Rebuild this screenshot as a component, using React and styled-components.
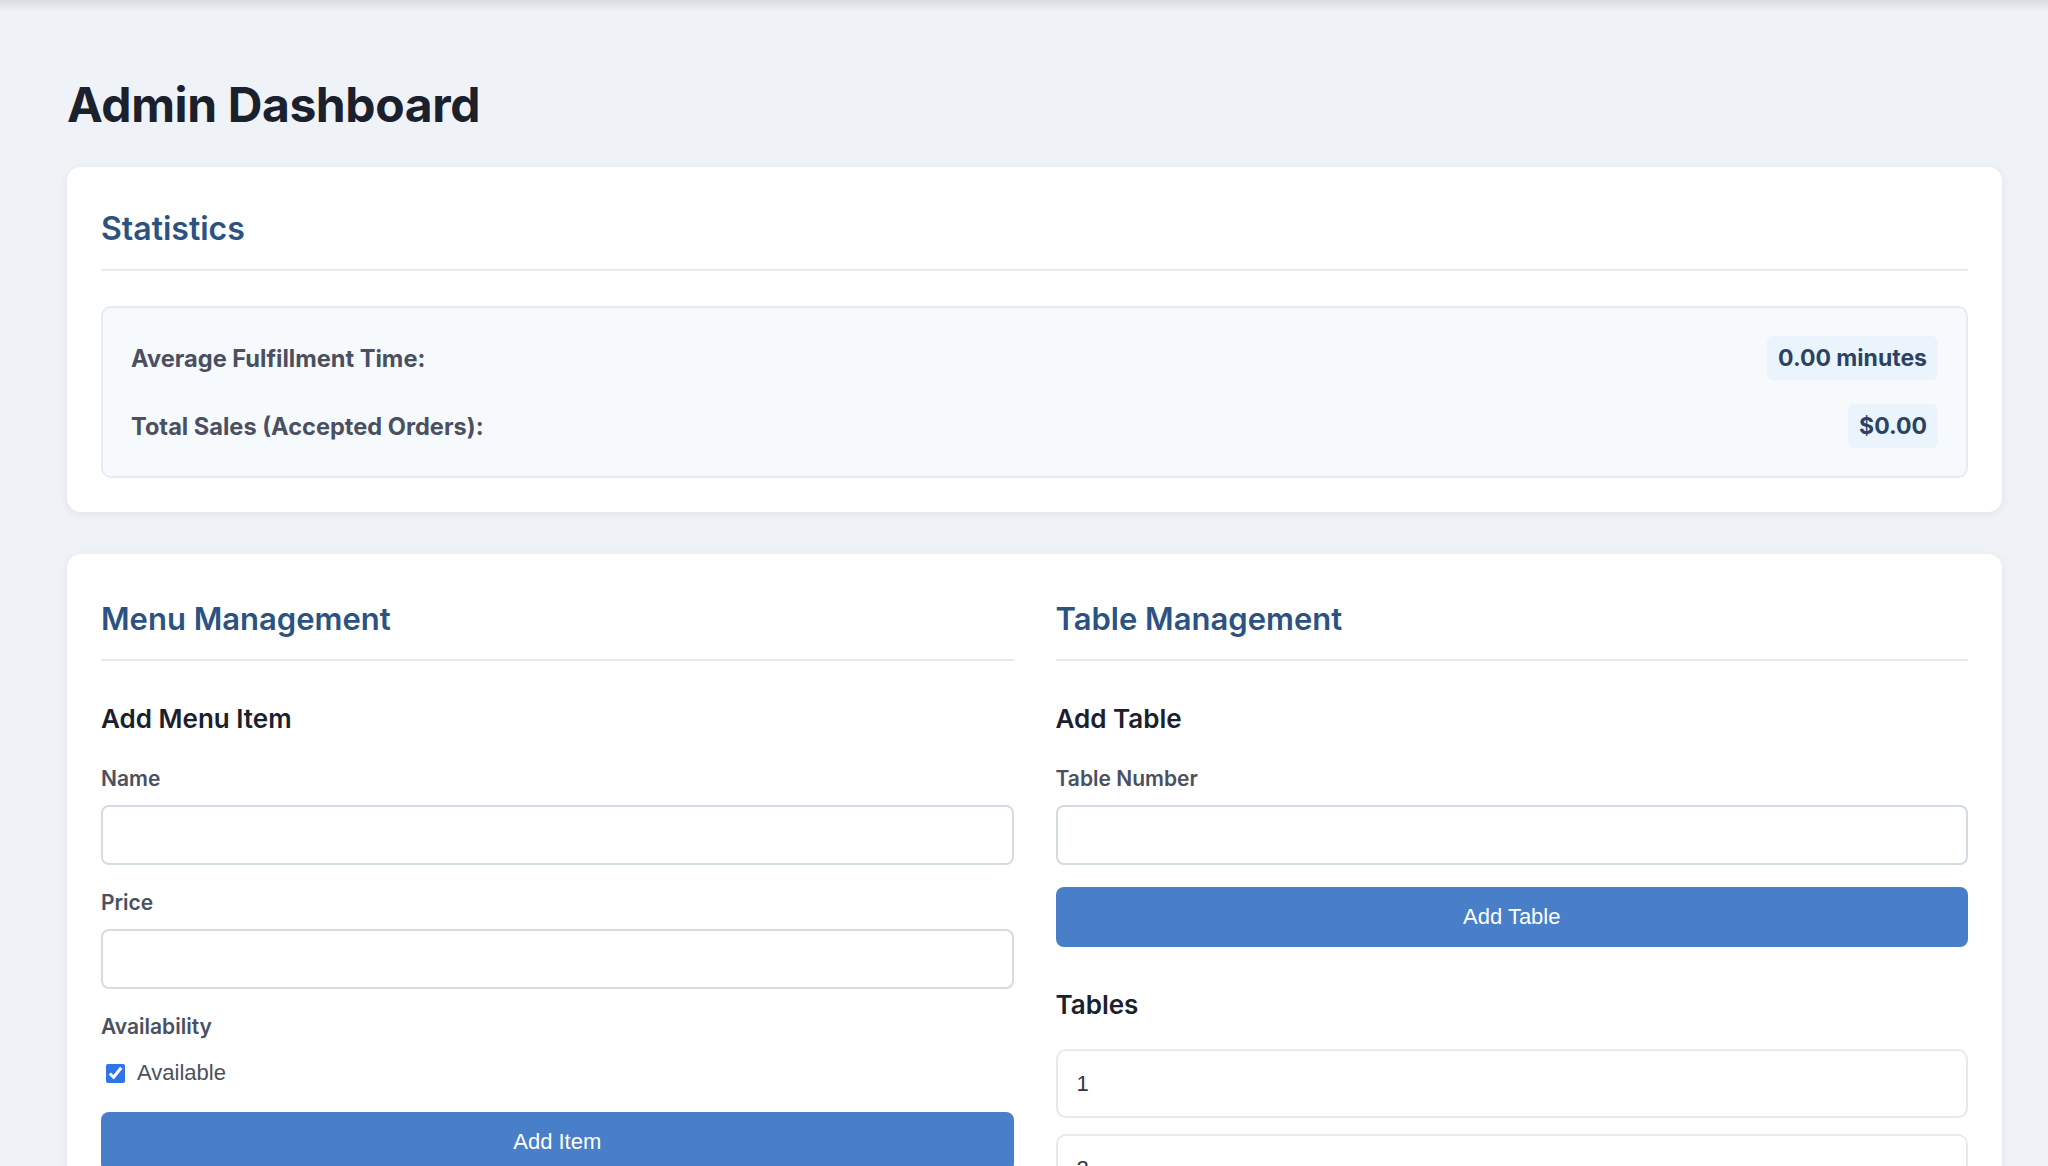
import React, { useState } from 'react'
import styled, { createGlobalStyle } from 'styled-components'

const GlobalStyle = createGlobalStyle`
  * { box-sizing: border-box; }
  html::-webkit-scrollbar, body::-webkit-scrollbar { display: none; }
  body {
    margin: 0;
    background:
      linear-gradient(to bottom, rgba(0, 0, 0, 0.09) 0px, rgba(0, 0, 0, 0) 12px) no-repeat,
      #eff2f6;
    font-family: Inter, "Noto Sans", sans-serif;
    color: #1a202c;
  }
`

const Page = styled.div`
  padding: 75px 46px 40px 67px;
`

const Title = styled.h1`
  margin: 0 0 32px;
  font-size: 48px;
  line-height: 60px;
  font-weight: 700;
  letter-spacing: -0.4px;
  color: #1a202c;
`

const Card = styled.section`
  background: #ffffff;
  border-radius: 14px;
  box-shadow: 0 2px 8px rgba(30, 41, 59, 0.07);
  padding: 34px;
  margin-bottom: 42px;
`

const SectionTitle = styled.h2`
  margin: ${p => p.$top || 9}px 0 0;
  padding-bottom: 21px;
  border-bottom: 2px solid #e6eaef;
  font-size: ${p => p.$size || 32}px;
  line-height: 38px;
  font-weight: 600;
  color: #2c5282;
`

const StatsBox = styled.div`
  margin-top: 35px;
  background: #f7fafc;
  border: 2px solid #e6ebf1;
  border-radius: 10px;
  padding: 28px;
  display: flex;
  flex-direction: column;
  gap: 24px;
`

const StatRow = styled.div`
  display: flex;
  align-items: center;
  justify-content: space-between;
  height: 44px;
`

const StatLabel = styled.span`
  font-size: 23.6px;
  font-weight: 700;
  color: #4a5061;
`

const StatValue = styled.span`
  background: #ebf4fd;
  border-radius: 6px;
  padding: 0 11px;
  height: 44px;
  display: flex;
  align-items: center;
  font-size: 23px;
  font-weight: 700;
  color: #2a4365;
`

const Columns = styled.div`
  display: grid;
  grid-template-columns: 1fr 1fr;
  column-gap: 42px;
`

const Column = styled.div`
  display: flex;
  flex-direction: column;
`

const SubTitle = styled.h3`
  margin: 42px 0 ${p => p.$after || 33}px;
  font-size: 26px;
  line-height: 1.2;
  font-weight: 600;
  color: #1a202c;
`

const FormGroup = styled.div`
  display: flex;
  flex-direction: column;
  margin-bottom: ${p => p.$gap || 26}px;
`

const Label = styled.label`
  font-size: 21px;
  line-height: 24px;
  font-weight: 600;
  color: #4a5061;
  margin-bottom: 14px;
`

const Input = styled.input`
  height: 60px;
  border: 2px solid #d5dbe3;
  border-radius: 8px;
  padding: 0 18px;
  font-family: "Liberation Sans", Arial, sans-serif;
  font-size: 22px;
  background: #fff;
  outline: none;
`

const CheckRow = styled.label`
  display: flex;
  align-items: center;
  gap: 12px;
  padding-left: 5px;
  margin-top: 7px;
  font-family: "Liberation Sans", Arial, sans-serif;
  font-size: 22px;
  line-height: 26px;
  color: #4a5061;
`

const Checkbox = styled.input`
  width: 19px;
  height: 19px;
  margin: 0;
  accent-color: #2f74e8;
`

const Button = styled.button`
  height: 60px;
  width: 100%;
  border: none;
  border-radius: 8px;
  background: #487fc8;
  color: #ffffff;
  font-family: "Liberation Sans", Arial, sans-serif;
  font-size: 22px;
  cursor: pointer;
`

const TableList = styled.div`
  display: flex;
  flex-direction: column;
  gap: 16px;
`

const TableItem = styled.div`
  height: 69px;
  border: 2px solid #e6eaef;
  border-radius: 10px;
  padding: 0 19px;
  display: flex;
  align-items: center;
  font-family: "Liberation Sans", Arial, sans-serif;
  font-size: 22px;
  color: #2d3748;
`

export default function App() {
  const [available, setAvailable] = useState(true)
  const tables = [1, 2, 3, 4]

  return (
    <>
      <GlobalStyle />
      <Page>
        <Title>Admin Dashboard</Title>

        <Card>
          <SectionTitle>Statistics</SectionTitle>
          <StatsBox>
            <StatRow>
              <StatLabel>Average Fulfillment Time:</StatLabel>
              <StatValue>0.00 minutes</StatValue>
            </StatRow>
            <StatRow>
              <StatLabel>Total Sales (Accepted Orders):</StatLabel>
              <StatValue>$0.00</StatValue>
            </StatRow>
          </StatsBox>
        </Card>

        <Card>
          <Columns>
            <Column>
              <SectionTitle $top={12} $size={31}>Menu Management</SectionTitle>
              <SubTitle>Add Menu Item</SubTitle>
              <FormGroup>
                <Label>Name</Label>
                <Input type="text" />
              </FormGroup>
              <FormGroup>
                <Label>Price</Label>
                <Input type="number" />
              </FormGroup>
              <FormGroup $gap={26}>
                <Label>Availability</Label>
                <CheckRow>
                  <Checkbox
                    type="checkbox"
                    checked={available}
                    onChange={e => setAvailable(e.target.checked)}
                  />
                  Available
                </CheckRow>
              </FormGroup>
              <Button>Add Item</Button>
            </Column>

            <Column>
              <SectionTitle $top={12} $size={31}>Table Management</SectionTitle>
              <SubTitle>Add Table</SubTitle>
              <FormGroup $gap={22}>
                <Label>Table Number</Label>
                <Input type="number" />
              </FormGroup>
              <Button>Add Table</Button>
              <SubTitle $after={29}>Tables</SubTitle>
              <TableList>
                {tables.map(t => (
                  <TableItem key={t}>{t}</TableItem>
                ))}
              </TableList>
            </Column>
          </Columns>
        </Card>
      </Page>
    </>
  )
}
